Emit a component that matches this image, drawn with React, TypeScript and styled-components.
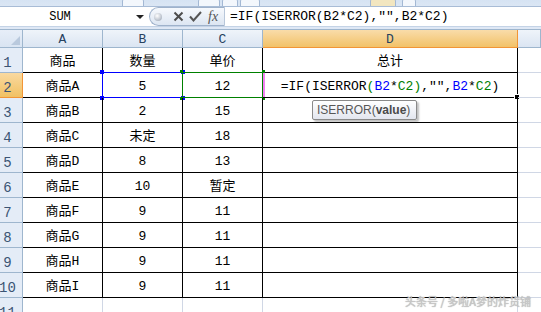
import React from 'react';
import styled, { createGlobalStyle, css } from 'styled-components';

const Global = createGlobalStyle`
  html, body { margin: 0; padding: 0; background: #fff; overflow: hidden; }
  body { width: 541px; height: 312px; }
`;

const MONO = `"Liberation Mono", "Noto Sans CJK SC", monospace`;

const Page = styled.div`
  position: relative;
  width: 541px;
  height: 312px;
  overflow: hidden;
  background: #dfe8f5;
  font-family: ${MONO};
  display: flex;
  flex-direction: column;
`;

const Ribbon = styled.div`
  height: 6px;
  flex: none;
  display: flex;
  align-items: flex-end;
  overflow: hidden;
  background: linear-gradient(#d6e3f3, #dbe6f4);
  border-bottom: 1px solid #a8bcd6;
`;

const RibbonBtn = styled.div<{ $gap: number; $w: number; $tone?: string }>`
  flex: none;
  margin-left: ${p => p.$gap}px;
  width: ${p => p.$w}px;
  height: 10px;
  margin-bottom: -4px;
  border: 1px solid #a3b8d4;
  border-radius: 3px;
  background: ${p => p.$tone ?? '#f3f7fc'};
`;

const FormulaBar = styled.div`
  flex: none;
  height: 19px;
  display: flex;
  align-items: center;
  background: #fff;
  border-bottom: 1px solid #c4d3e6;
`;

const NameBox = styled.div`
  flex: none;
  width: 120px;
  text-align: center;
  font-size: 12px;
  color: #000;
`;

const Arrow = styled.div`
  flex: none;
  margin-left: 16px;
  width: 0;
  height: 0;
  border-left: 4px solid transparent;
  border-right: 4px solid transparent;
  border-top: 4px solid #222;
`;

const FxGroup = styled.div`
  flex: none;
  margin-left: 5px;
  width: 76px;
  height: 19px;
  box-sizing: border-box;
  border: 1px solid #9fb2cb;
  border-right: 1px solid #b8c7da;
  border-radius: 10px 0 0 10px;
  background: linear-gradient(#f6f9fd, #dde6f2);
  display: flex;
  align-items: center;
  padding-left: 4px;
  gap: 0;
`;

const Dot = styled.div`
  flex: none;
  width: 8px;
  height: 8px;
  border-radius: 50%;
  background: radial-gradient(circle at 40% 35%, #ffffff, #b4bcc8 70%, #9aa3b0);
`;

const IconSlot = styled.div<{ $ml: number }>`
  flex: none;
  margin-left: ${p => p.$ml}px;
  display: flex;
  align-items: center;
`;

const Fx = styled.span`
  font-family: "Liberation Serif", serif;
  font-style: italic;
  font-size: 14px;
  color: #555;
  line-height: 1;
`;

const FormulaText = styled.div`
  flex: 1;
  padding-left: 5px;
  font-size: 13px;
  line-height: 1;
  color: #000;
  white-space: pre;
`;

const Strip = styled.div`
  flex: none;
  height: 2px;
  background: #dfe8f5;
`;

const Sheet = styled.div`
  flex: none;
  display: grid;
  grid-template-columns: 23px 80px 80px 80px 255px 1fr;
  grid-template-rows: 18px repeat(11, 25px);
  background: #fff;
  border-top: 1px solid #9eb6ce;
`;

const Corner = styled.div`
  box-sizing: border-box;
  background: linear-gradient(#e7eef8, #d9e4f2);
  border-right: 1px solid #9eb6ce;
  border-bottom: 1px solid #9eb6ce;
  display: flex;
  align-items: flex-end;
  justify-content: flex-end;
  padding: 0 2px 2px 0;
`;

const ColHeader = styled.div<{ $sel?: boolean }>`
  box-sizing: border-box;
  display: flex;
  align-items: center;
  justify-content: center;
  font-size: 13px;
  line-height: 1;
  color: #27415f;
  padding-top: 1px;
  ${p =>
    p.$sel
      ? css`
          background: linear-gradient(#f9dcaa, #f2c268);
          border-right: 1px solid #f29536;
          border-bottom: 1px solid #f29536;
        `
      : css`
          background: linear-gradient(#eff4fa, #dbe5f2);
          border-right: 1px solid #9eb6ce;
          border-bottom: 1px solid #9eb6ce;
        `}
`;

const RowHeader = styled.div<{ $sel?: boolean }>`
  box-sizing: border-box;
  display: flex;
  align-items: flex-end;
  justify-content: center;
  padding: 0 7px 2px 0;
  font-size: 14px;
  line-height: 1;
  color: #3b5474;
  ${p =>
    p.$sel
      ? css`
          background: linear-gradient(#f9d9a0, #f1c163);
          border-right: 1px solid #f29536;
          border-bottom: 1px solid #f29536;
        `
      : css`
          background: #e4ecf7;
          border-right: 1px solid #9eb6ce;
          border-bottom: 1px solid #9eb6ce;
        `}
`;

const Cell = styled.div<{ $table?: boolean; $last?: boolean }>`
  position: relative;
  box-sizing: border-box;
  display: flex;
  align-items: center;
  justify-content: center;
  padding-top: 2px;
  font-size: 13px;
  line-height: 1;
  color: #000;
  white-space: pre;
  border-bottom: 1px solid ${p => (p.$table ? '#000' : '#d0d7e5')};
  border-right: ${p => (p.$last ? 'none' : `1px solid ${p.$table ? '#000' : '#d0d7e5'}`)};
`;

const RefBox = styled.div<{ $color: string }>`
  position: absolute;
  left: -1px;
  top: -1px;
  right: -1px;
  bottom: -1px;
  border: 1px solid ${p => p.$color};
  pointer-events: none;
`;

const Handle = styled.div<{ $color: string; $size: number; $x: 'l' | 'r'; $y: 't' | 'b' }>`
  position: absolute;
  width: ${p => p.$size}px;
  height: ${p => p.$size}px;
  background: ${p => p.$color};
  ${p => (p.$x === 'l' ? 'left' : 'right')}: ${p => -Math.ceil(p.$size / 2) - 1}px;
  ${p => (p.$y === 't' ? 'top' : 'bottom')}: ${p => -Math.ceil(p.$size / 2) - 1}px;
`;

const PinkEdge = styled.div`
  position: absolute;
  left: 0;
  top: 0;
  bottom: 0;
  width: 2px;
  background: #f080f0;
`;

const FillHandle = styled.div`
  position: absolute;
  right: -3px;
  bottom: -3px;
  width: 4px;
  height: 4px;
  background: #000;
  border: 1px solid #fff;
`;

const Tok = styled.span<{ $c?: string }>`
  color: ${p => p.$c ?? '#000'};
`;

const Tooltip = styled.div`
  position: absolute;
  left: 49px;
  top: 2px;
  width: 105px;
  height: 20px;
  box-sizing: border-box;
  border: 1px solid #8a8a8a;
  border-radius: 2px;
  background: linear-gradient(#ffffff, #e3e6ef);
  box-shadow: 2px 2px 2px rgba(0, 0, 0, 0.25);
  font-family: "Liberation Sans", Arial, sans-serif;
  font-size: 12px;
  color: #575757;
  display: flex;
  align-items: center;
  padding-left: 4px;
  z-index: 2;
`;

const Bold = styled.b`
  font-weight: 700;
  color: #4a4a4a;
`;

const Watermark = styled.div`
  position: absolute;
  right: 10px;
  bottom: 5px;
  font-family: "Noto Sans CJK SC", sans-serif;
  font-size: 11px;
  line-height: 1;
  color: #c9c9c9;
  text-shadow: 0 0 1px #9a9a9a;
  white-space: pre;
`;

const data: [string, string, string][] = [
  ['商品', '数量', '单价'],
  ['商品A', '5', '12'],
  ['商品B', '2', '15'],
  ['商品C', '未定', '18'],
  ['商品D', '8', '13'],
  ['商品E', '10', '暂定'],
  ['商品F', '9', '11'],
  ['商品G', '9', '11'],
  ['商品H', '9', '11'],
  ['商品I', '9', '11'],
];

const corners: ['l' | 'r', 't' | 'b'][] = [
  ['l', 't'],
  ['r', 't'],
  ['l', 'b'],
  ['r', 'b'],
];

export default function App() {
  return (
    <Page>
      <Global />
      <Ribbon>
        <RibbonBtn $gap={122} $w={20} />
        <RibbonBtn $gap={54} $w={20} />
        <RibbonBtn $gap={2} $w={14} />
        <RibbonBtn $gap={2} $w={18} />
        <RibbonBtn $gap={110} $w={24} $tone="#f2e6c0" />
        <RibbonBtn $gap={6} $w={12} />
      </Ribbon>
      <FormulaBar>
        <NameBox>SUM</NameBox>
        <Arrow />
        <FxGroup>
          <Dot />
          <IconSlot $ml={11}>
            <svg width="11" height="11" viewBox="0 0 11 11">
              <path d="M1.5 1.5 L9.5 9.5 M9.5 1.5 L1.5 9.5" stroke="#4d4d4d" strokeWidth="2" fill="none" />
            </svg>
          </IconSlot>
          <IconSlot $ml={5}>
            <svg width="13" height="11" viewBox="0 0 13 11">
              <path d="M1 5.5 L4.5 9.5 L12 1" stroke="#555" strokeWidth="2" fill="none" />
            </svg>
          </IconSlot>
          <IconSlot $ml={6}>
            <Fx>fx</Fx>
          </IconSlot>
        </FxGroup>
        <FormulaText>=IF(ISERROR(B2*C2),"",B2*C2)</FormulaText>
      </FormulaBar>
      <Strip />
      <Sheet>
        <Corner>
          <svg width="9" height="9" viewBox="0 0 9 9">
            <path d="M9 0 L9 9 L0 9 Z" fill="#b9c9dd" />
          </svg>
        </Corner>
        <ColHeader>A</ColHeader>
        <ColHeader>B</ColHeader>
        <ColHeader>C</ColHeader>
        <ColHeader $sel>D</ColHeader>
        <ColHeader />
        {data.map((row, i) => (
          <React.Fragment key={i}>
            <RowHeader $sel={i === 1}>{i + 1}</RowHeader>
            <Cell $table>{row[0]}</Cell>
            <Cell $table>
              {row[1]}
              {i === 1 && (
                <RefBox $color="#0000ff">
                  {corners.map(([x, y]) => (
                    <Handle key={x + y} $color="#0000ff" $size={4} $x={x} $y={y} />
                  ))}
                </RefBox>
              )}
            </Cell>
            <Cell $table>
              {row[2]}
              {i === 1 && (
                <RefBox $color="#008000">
                  {corners.map(([x, y]) => (
                    <Handle key={x + y} $color="#008000" $size={3} $x={x} $y={y} />
                  ))}
                </RefBox>
              )}
            </Cell>
            <Cell $table>
              {i === 0 && '总计'}
              {i === 1 && (
                <>
                  <PinkEdge />
                  <Tok>=IF(ISERROR</Tok>
                  <Tok $c="#008000">(</Tok>
                  <Tok $c="#0000ff">B2</Tok>
                  <Tok>*</Tok>
                  <Tok $c="#008000">C2)</Tok>
                  <Tok>,"",</Tok>
                  <Tok $c="#0000ff">B2</Tok>
                  <Tok>*</Tok>
                  <Tok $c="#008000">C2</Tok>
                  <Tok>)</Tok>
                  <FillHandle />
                </>
              )}
              {i === 2 && (
                <Tooltip>
                  ISERROR(<Bold>value</Bold>)
                </Tooltip>
              )}
            </Cell>
            <Cell $last />
          </React.Fragment>
        ))}
        <RowHeader>11</RowHeader>
        <Cell />
        <Cell />
        <Cell />
        <Cell />
        <Cell $last />
      </Sheet>
      <Watermark>头条号 / 多啦A梦的炸货铺</Watermark>
    </Page>
  );
}
